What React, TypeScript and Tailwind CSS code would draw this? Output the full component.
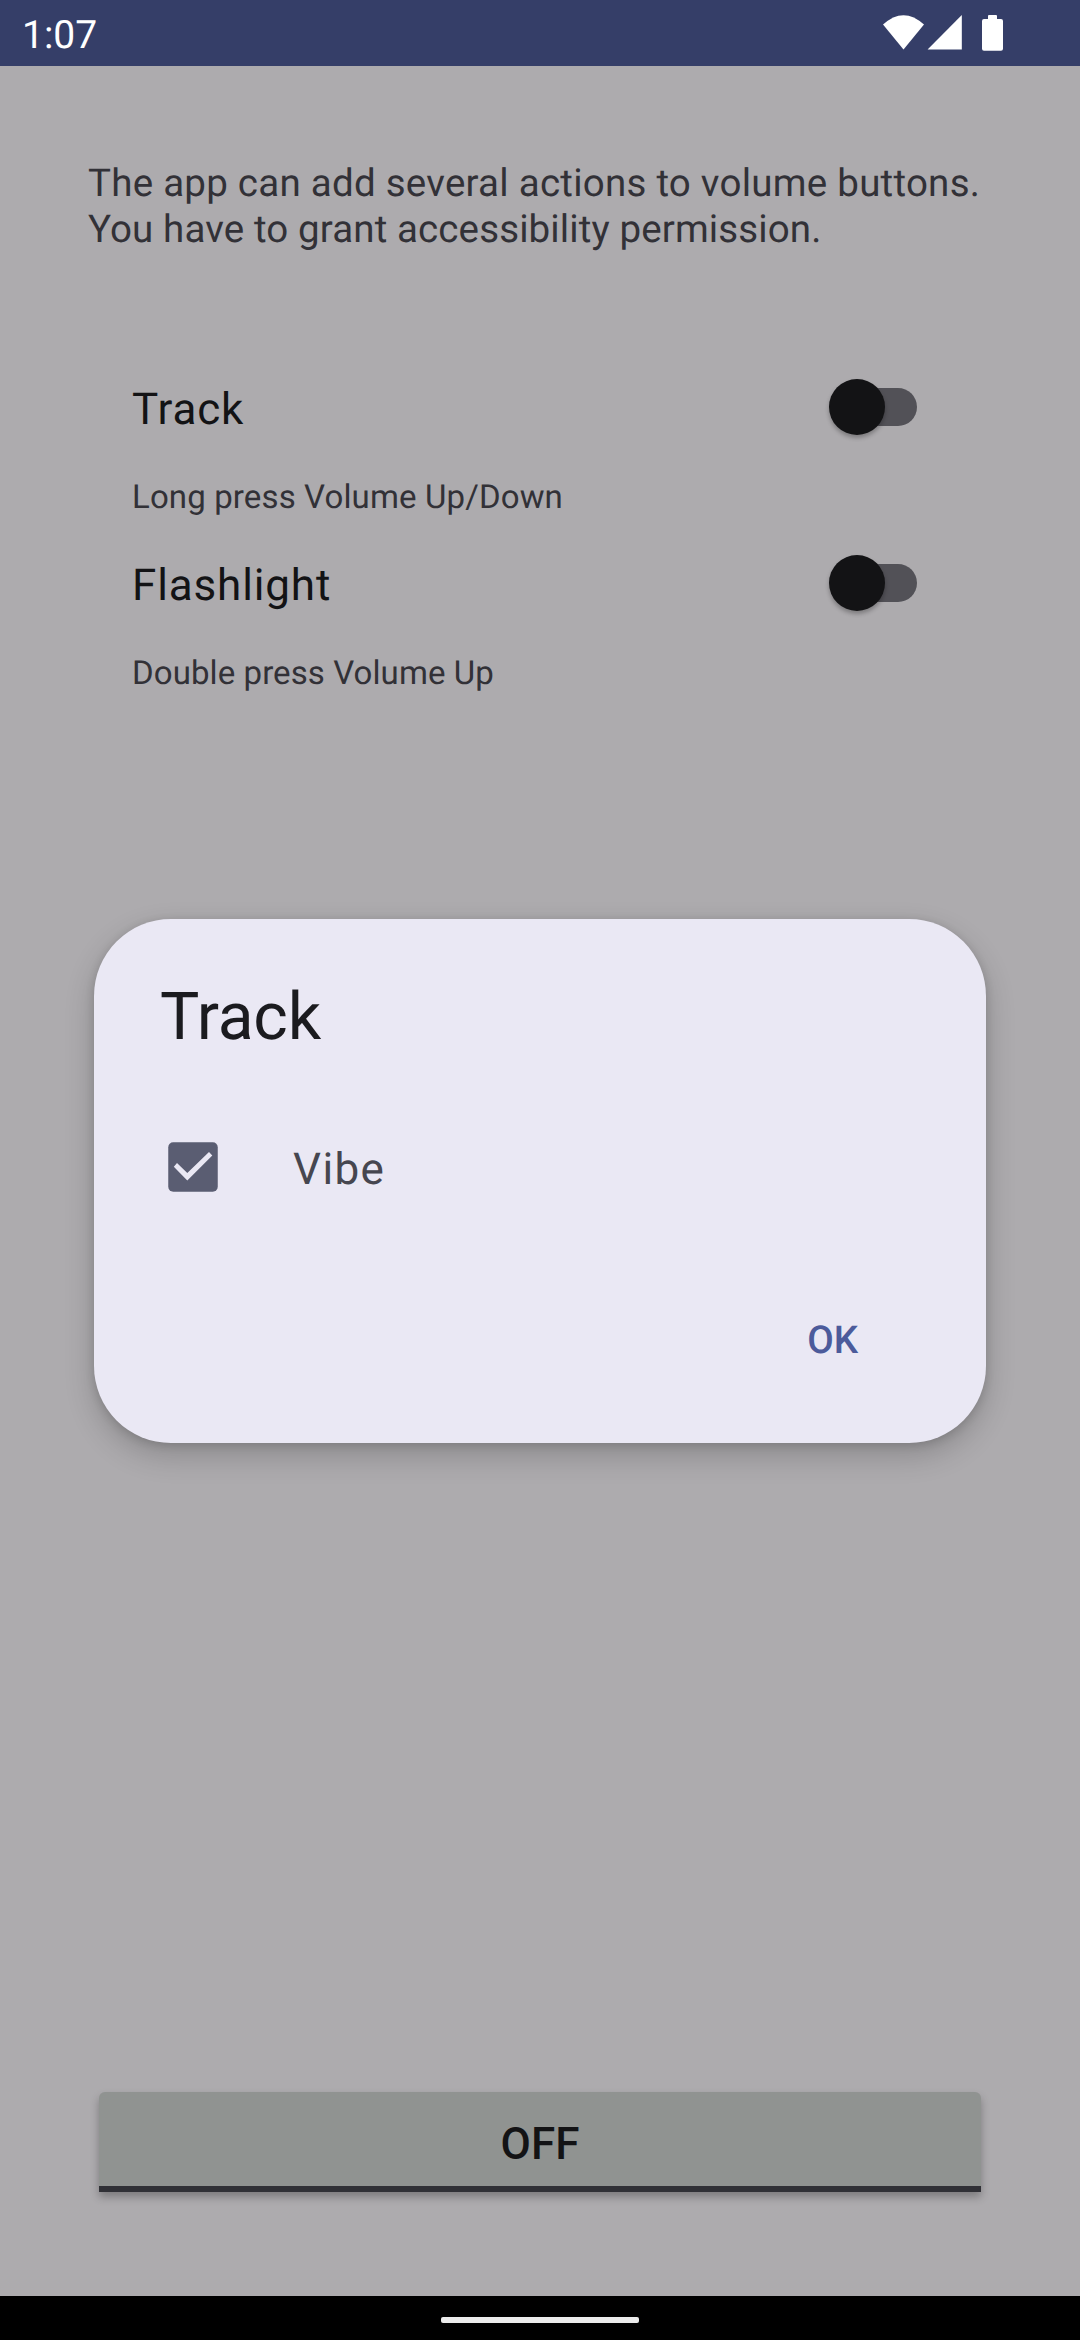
function Row({ title, children }: { title: string; children: React.ReactNode }) {
  return (
    <div className="h-44">
      <div className="flex h-[88px] items-center justify-between">
        <span className="pt-1 text-[44px] leading-[52px] tracking-[0.85px] text-[#131315]">{title}</span>
        <span className="relative h-[56px] w-[88px]">
          <span className="absolute top-[9px] left-[10px] h-[38px] w-[78px] rounded-full bg-[#525157]" />
          <span className="absolute top-0 left-0 size-[55.5px] rounded-full bg-[#131315] shadow-[0_3px_4px_rgba(0,0,0,0.28)]" />
        </span>
      </div>
      <p className="pt-[27px] text-[33px] leading-[39px] text-[#323137]">{children}</p>
    </div>
  );
}

export default function App() {
  return (
    <div className="relative flex h-[2340px] w-[1080px] flex-col overflow-hidden bg-[#adabae] font-[Roboto,sans-serif] [text-rendering:geometricPrecision]">
      <header className="flex h-[66px] items-center justify-between bg-[#353e68] pl-[22px] text-white">
        <span className="pt-1 text-[39px] leading-[46px]">1:07</span>
        <svg className="h-[66px] w-[220px]" viewBox="860 0 220 66" fill="white">
          <path d="M883 24.6Q903.5 5.8 924 24.6L903.5 49.4Z" />
          <path d="M927.6 49.6L961.8 15V49.6Z" />
          <path d="M988 19V16q0-1 1-1h7q1 0 1 1v3h4q2 0 2 2v27.7q0 2-2 2h-17q-2 0-2-2V21q0-2 2-2Z" />
        </svg>
      </header>
      <main className="flex grow flex-col px-[88px]">
        <p className="pt-[95px] text-[38.5px] leading-[46px] whitespace-nowrap text-[#323137]">
          <span className="tracking-[0.25px]">The app can add several actions to volume buttons.</span>
          <br />
          <span className="tracking-[0.12px]">You have to grant accessibility permission.</span>
        </p>
        <section className="mt-[110px] px-[44px]">
          <div className="w-[785px]">
            <Row title="Track"><span className="tracking-[0.13px]">Long press Volume Up/Down</span></Row>
            <Row title="Flashlight"><span className="tracking-[0.09px]">Double press Volume Up</span></Row>
          </div>
        </section>
        <button className="mx-[11px] mt-auto mb-[104px] h-[100px] rounded-t-[6px] border-b-[6px] border-[#303036] bg-[#909391] pt-[10px] text-[44px] font-medium text-[#131315] shadow-[0_5px_8px_rgba(0,0,0,0.28)]">OFF</button>
      </main>
      <footer className="flex h-[44px] items-center justify-center bg-black pt-1">
        <span className="h-[6px] w-[198px] rounded-[2px] bg-[#ebebeb]" />
      </footer>
      <div className="absolute top-[919px] left-[94px] h-[524px] w-[892px] rounded-[77px] bg-[#eae8f4] px-[66px] shadow-[0_12px_30px_rgba(0,0,0,0.2),0_2px_10px_rgba(0,0,0,0.14)]">
        <h1 className="pt-[59px] text-[66px] leading-[79px] tracking-[-0.2px] text-[#1b1b1f]">Track</h1>
        <div className="mt-[66px] flex h-[88px] items-center pl-[8px]">
          <svg className="size-[50px]" viewBox="0 0 50 50">
            <rect x="0.25" y="0.25" width="49.5" height="49.5" rx="5" fill="#5a5d72" />
            <path d="M9 21L19.3 31L41 10L44.3 13.5L19.3 38.6L5.8 24.7Z" fill="#eae8f4" />
          </svg>
          <span className="ml-[75px] pt-1 text-[44px] tracking-[1.38px] text-[#46464f]">Vibe</span>
        </div>
        <div className="mt-[101px] flex justify-end pr-[62px] text-[38.5px] leading-[57px] font-medium text-[#4c5b9b]">OK</div>
      </div>
    </div>
  );
}
